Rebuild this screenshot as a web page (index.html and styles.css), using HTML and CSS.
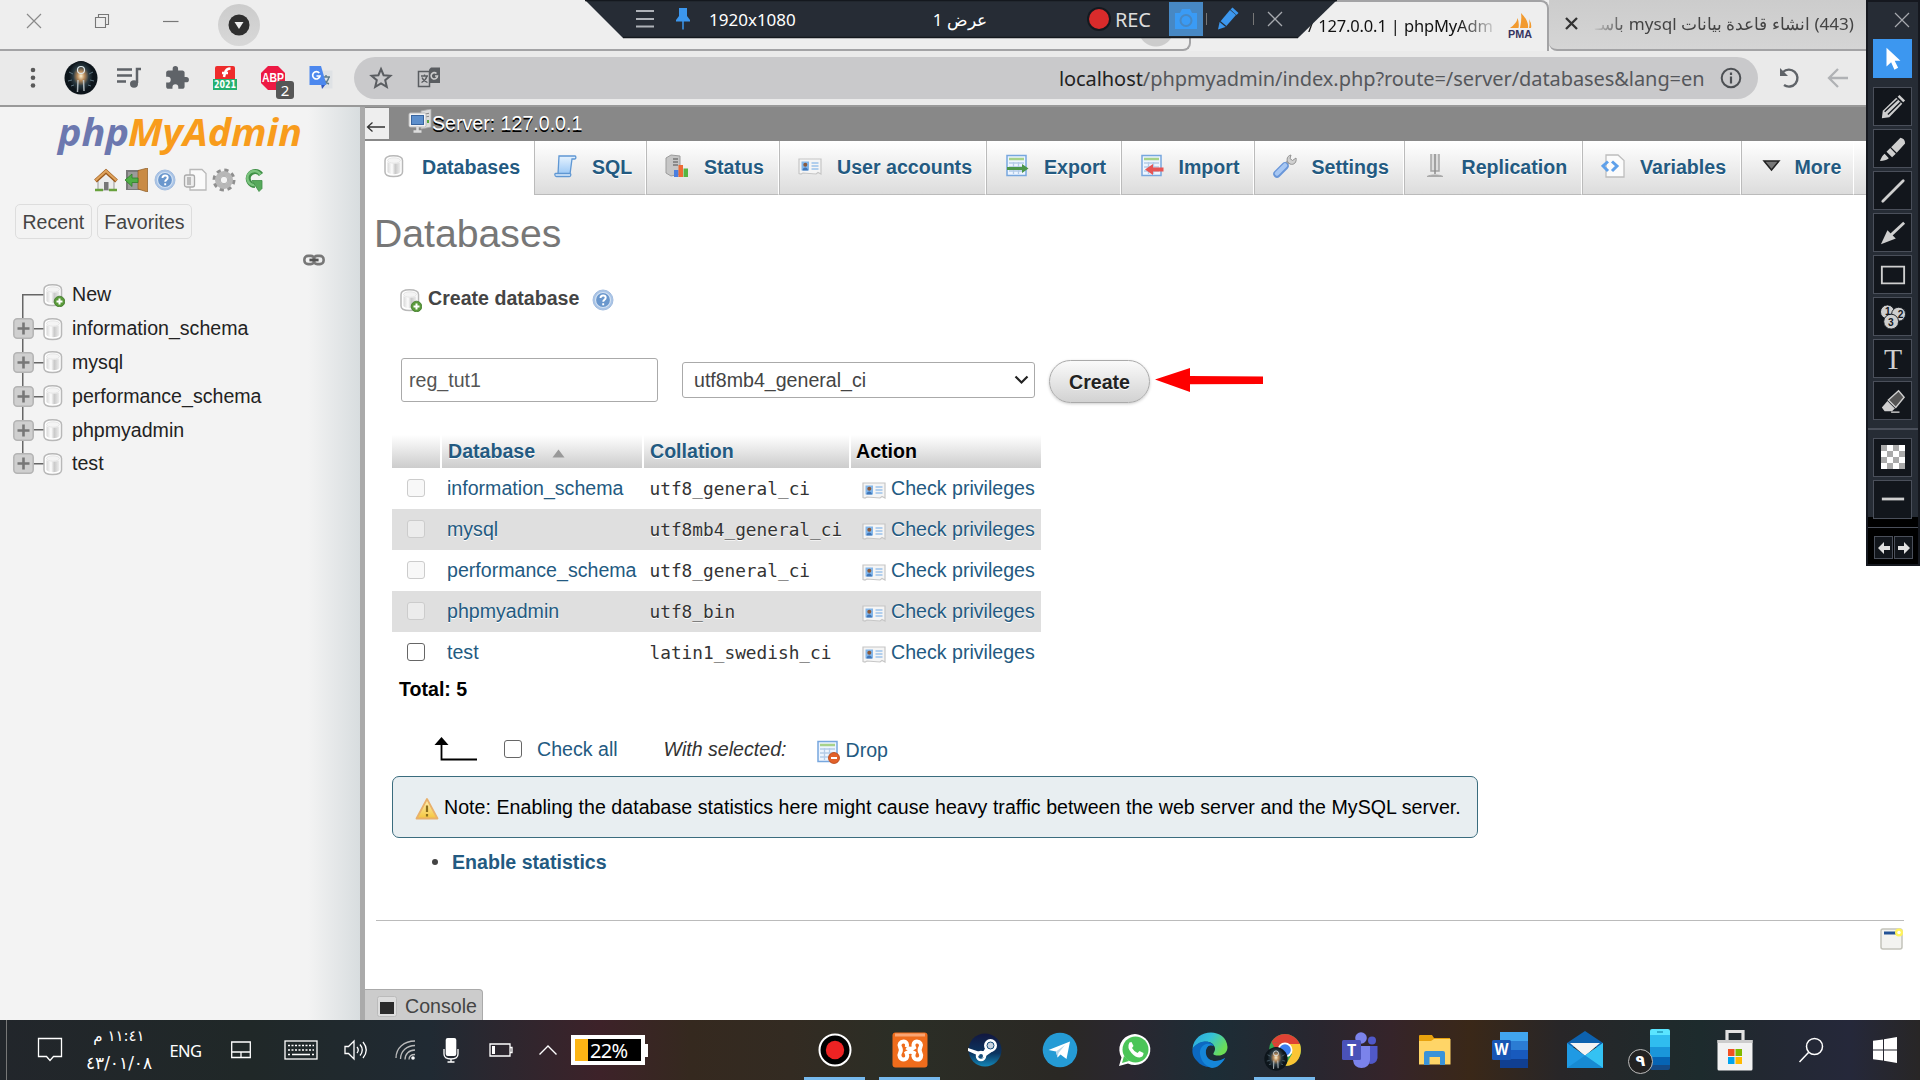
FILE: index.html
```html
<!DOCTYPE html>
<html lang="en">
<head>
<meta charset="utf-8">
<title>localhost / 127.0.0.1 | phpMyAdmin</title>
<link rel="stylesheet" href="styles.css">
</head>
<body>
<svg class="defs" width="0" height="0">
  <defs>
    <linearGradient id="gCyl" x1="0" x2="1"><stop offset="0" stop-color="#d8d8d8"/><stop offset=".35" stop-color="#fdfdfd"/><stop offset=".6" stop-color="#c9c9c9"/><stop offset="1" stop-color="#eee"/></linearGradient>
    <linearGradient id="gBlue" x1="0" y1="0" x2="0" y2="1"><stop offset="0" stop-color="#e6f3ff"/><stop offset="1" stop-color="#9cc8f5"/></linearGradient>
    <linearGradient id="gWarn" x1="0" y1="0" x2="0" y2="1"><stop offset="0" stop-color="#fff3b8"/><stop offset="1" stop-color="#f5c53c"/></linearGradient>
    <linearGradient id="gSteam" x1="0" y1="0" x2="0" y2="1"><stop offset="0" stop-color="#12173f"/><stop offset=".6" stop-color="#0b3560"/><stop offset="1" stop-color="#1387b8"/></linearGradient>
    <linearGradient id="gEdge" x1="0" y1="0" x2="1" y2=".5"><stop offset="0" stop-color="#2aa5e0"/><stop offset=".5" stop-color="#35c1d6"/><stop offset="1" stop-color="#6bdd55"/></linearGradient>
    <radialGradient id="gLamp"><stop offset="0" stop-color="#fff3d0"/><stop offset=".3" stop-color="#b98c5c"/><stop offset=".65" stop-color="#2a3a42"/><stop offset="1" stop-color="#0d151b"/></radialGradient>
  </defs>
  <symbol id="db" viewBox="0 0 24 24"><path d="M3 6.500c0-3 3-4.800 8.500-4.800s9 1.800 9 4.800v11.500c0 3-3.500 4.500-9 4.500s-8.500-1.500-8.500-4.500z" fill="#fff" stroke="#b8b8b8" stroke-width="1.500"/><path d="M5.500 8c2 2 11 2 13 0v10c-2 3-11 3-13 0z" fill="url(#gCyl)"/><ellipse cx="12" cy="6.500" rx="6.500" ry="2.700" fill="#f4f4f4" stroke="#ddd" stroke-width=".7"/></symbol>
  <symbol id="dbnew" viewBox="0 0 24 24"><use href="#db"/><circle cx="18.500" cy="18.500" r="5.300" fill="#5a9a3a" stroke="#3b7526" stroke-width=".8"/><path d="M18.500 15.500v6M15.500 18.500h6" stroke="#fff" stroke-width="2"/></symbol>
  <symbol id="help" viewBox="0 0 24 24"><circle cx="12" cy="12" r="10" fill="#a9c4e6" stroke="#a3bde0"/><circle cx="12" cy="12" r="7.500" fill="#6a97cd" stroke="#d3e1f2" stroke-width="1.200"/><path d="M9.500 10c0-3.500 5.200-3.200 5.200-.3 0 2-2.500 2-2.500 4M12.200 15.300v1.900" fill="none" stroke="#fff" stroke-width="1.900"/></symbol>
  <symbol id="home" viewBox="0 0 24 24"><path d="M4 12l8-7 8 7v10H4z" fill="#ececec" stroke="#999"/><path d="M10 22v-8h4.500v8z" fill="#777"/><path d="M1.500 13L12 3.500 22.500 13" fill="none" stroke="#9c5a1c" stroke-width="4"/><path d="M1.500 12.500L12 3 22.500 12.500" fill="none" stroke="#dfa35c" stroke-width="2.200"/><path d="M1 22h8M15 22h8" stroke="#68a13c" stroke-width="2.500"/></symbol>
  <symbol id="exit" viewBox="0 0 24 24"><path d="M2 2h16v20H2z" fill="#7a7a7a"/><path d="M4 4h10v17H4z" fill="#9b9b9b"/><path d="M14 2.500L23.500 0v24L14 21z" fill="#c98b45" stroke="#8d5a22" stroke-width=".7"/><path d="M1 12l7-6v4h6v4.500H8v4z" fill="#4fae45" stroke="#2e7d2a" stroke-width=".8"/></symbol>
  <symbol id="docs" viewBox="0 0 24 24"><path d="M7 1.500h12l4 4V22H7z" fill="#fafafa" stroke="#b9b9b9" stroke-width="1.300"/><rect x="1.500" y="7" width="10" height="12" rx="2" fill="#eee" stroke="#aaa" stroke-width="1.300"/><rect x="4" y="9" width="4" height="8" fill="#bbb"/></symbol>
  <symbol id="gear" viewBox="0 0 24 24"><circle cx="12" cy="12" r="9.500" fill="none" stroke="#8f8f8f" stroke-width="4" stroke-dasharray="4 3.460"/><circle cx="12" cy="12" r="6.500" fill="none" stroke="#b7b7b7" stroke-width="5"/><circle cx="12" cy="12" r="3.800" fill="#f3f3f3" stroke="#999" stroke-width=".8"/></symbol>
  <symbol id="refresh" viewBox="0 0 24 24"><path d="M19 6.500A7 7 0 1 0 13 17.500" fill="none" stroke="#3f8f46" stroke-width="5"/><path d="M18.500 6.500A7 7 0 1 0 13 17" fill="none" stroke="#7cc47f" stroke-width="2.500"/><path d="M10 12.500h10v8l-3 3z" fill="#57a95b" stroke="#3f8f46" stroke-width=".8"/></symbol>
  <symbol id="link" viewBox="0 0 24 24"><rect x="1.500" y="7.500" width="11" height="9" rx="4" fill="none" stroke="#777" stroke-width="2.800"/><rect x="11.500" y="7.500" width="11" height="9" rx="4" fill="none" stroke="#777" stroke-width="2.800"/><path d="M7 12h10" stroke="#555" stroke-width="3"/></symbol>
  <symbol id="plus" viewBox="0 0 21 21"><rect x=".8" y=".8" width="19.400" height="19.400" rx="3.500" fill="#cfcfcf" stroke="#b4b4b4" stroke-width="1.500"/><path d="M10.500 4.500v12M4.500 10.500h12" stroke="#777" stroke-width="2.600"/></symbol>
  <symbol id="server" viewBox="0 0 24 24"><path d="M13 2l10-2v18l-10 2z" fill="#dcdcdc" stroke="#aaa" stroke-width=".8"/><path d="M17 5l4-.7M17 8l4-.7" stroke="#888"/><path d="M20 11v3" stroke="#5aa845" stroke-width="2"/><rect x="1" y="4" width="17" height="14" rx="1.500" fill="#f3f3f3" stroke="#bbb"/><rect x="3.500" y="6.500" width="12" height="9" fill="#5d8fcc" stroke="#39659f"/><path d="M9.500 18v4M5.500 22.500h8" stroke="#ddd" stroke-width="2.500"/></symbol>
  <symbol id="sql" viewBox="0 0 24 24"><path d="M6 2h16c1 0 1.500 3-.5 3H19l-2 15H5z" fill="url(#gBlue)" stroke="#5f97d3" stroke-width="1.300"/><path d="M2.500 19.500h14c2 0 1.500 3 0 3h-13c-2 0-2-3-1-3z" fill="#dcecfc" stroke="#5f97d3" stroke-width="1.300"/></symbol>
  <symbol id="status" viewBox="0 0 24 24"><path d="M1 4l5-3 9 1v18l-9 2-5-3z" fill="#c6c6c6" stroke="#9c9c9c"/><path d="M8 5h5M8 8h5M8 11h5" stroke="#777" stroke-width="1.500"/><path d="M9 16h4.500v7H9z" fill="#4a7fe0"/><path d="M13.500 11H18v12h-4.500z" fill="#ee6b35"/><path d="M18.500 14.500H23V23h-4.500z" fill="#57b540"/></symbol>
  <symbol id="card" viewBox="0 0 24 24"><path d="M1 5h22v15l-3-1.500-2 1.500-13-1-2 1-2-.5z" fill="#f5f5f5" stroke="#c6c6c6" stroke-width="1.200"/><rect x="3.500" y="7.500" width="7.500" height="9" fill="#82b6ea"/><circle cx="7.300" cy="10.800" r="2" fill="#8b5a3c"/><path d="M4.500 16.500c0-4 5.500-4 5.500 0z" fill="#3f76b8"/><path d="M13.500 9h7M13.500 12h7M13.500 15h7" stroke="#9cc2ea" stroke-width="1.400"/></symbol>
  <symbol id="table" viewBox="0 0 24 24"><rect x="2" y="1.500" width="19" height="20" fill="#edf5ff" stroke="#77a7de" stroke-width="1.500"/><path d="M4 5h15" stroke="#a7d28a" stroke-width="2.500"/><path d="M4 9h15M4 13h15M4 17h15M8.500 8v12M13.500 8v12" stroke="#b4cce8" stroke-width="1.300"/></symbol>
  <symbol id="export" viewBox="0 0 24 24"><use href="#table"/><path d="M2 13h15v-3l6.500 4.500-6.500 4.500v-3H2z" fill="#4c9649"/></symbol>
  <symbol id="import" viewBox="0 0 24 24"><use href="#table"/><path d="M23.500 13.500H13v-3.500l-8 5.500 8 5.500v-3.500h10.500z" fill="#e65555"/></symbol>
  <symbol id="drop" viewBox="0 0 24 24"><use href="#table"/><circle cx="18" cy="18" r="5.500" fill="#e2612a" stroke="#b84414" stroke-width=".8"/><path d="M15 18h6" stroke="#fff" stroke-width="2"/></symbol>
  <symbol id="wrench" viewBox="0 0 24 24"><path d="M11 12.500L17 6" stroke="#a6a6a6" stroke-width="4"/><path d="M18 1c-5 1-5 7-1 9 4 1.500 7-2 6-6l-3.500 2.500-2.500-2z" fill="#d0d0d0" stroke="#929292"/><path d="M4 20l8-8" stroke="#6996d8" stroke-width="7.500" stroke-linecap="round"/><path d="M4 19.500l8-8" stroke="#a7c7f3" stroke-width="4.500" stroke-linecap="round"/></symbol>
  <symbol id="replication" viewBox="0 0 24 24"><path d="M8 0v17h8V0" fill="#ddd" stroke="#a5a5a5" stroke-width="1.500"/><path d="M12 0v20" stroke="#8c8c8c" stroke-width="1.500"/><path d="M4 22.500c3-2 13-2 16 0z" fill="#aaa" stroke="#aaa"/></symbol>
  <symbol id="variables" viewBox="0 0 24 24"><path d="M5 1h12l6 5.500V23H5z" fill="#fbfbfb" stroke="#bdbdbd" stroke-width="1.300"/><path d="M7 7.500L2 12l5 5M11 7.500l5 4.500-5 5" fill="none" stroke="#5ea0ea" stroke-width="3"/></symbol>
  <symbol id="warn" viewBox="0 0 24 24"><path d="M12 2L22.500 21.500h-21z" fill="url(#gWarn)" stroke="#e8b06a" stroke-width="1.800" stroke-linejoin="round"/><path d="M12 8.500v6.500M12 17v2.500" stroke="#8a6d1c" stroke-width="2.200"/></symbol>
  <symbol id="lamp" viewBox="0 0 34 34"><circle cx="17" cy="17" r="16.500" fill="#0d151b"/><ellipse cx="17" cy="15" rx="12" ry="15" fill="url(#gLamp)"/><circle cx="17" cy="9" r="3.500" fill="none" stroke="#dfe9ec" stroke-width="1.200"/><path d="M14 19l-.5 12M19.500 19l.5 11" stroke="#cdd6da" stroke-width="1.500" opacity=".8"/><path d="M5 11l4 2M4 20l4-1M29 11l-4 2M30 20l-4-1M7 25l3-1M27 25l-3-1" stroke="#5d7480"/></symbol>
  <symbol id="transl" viewBox="0 0 24 24"><path d="M9 4.500h14.500v18H13z" fill="#dfe2e5"/><path d="M13 11h8M17 9v2M20 11c-1 4-3 6-6 7.500M14.500 13c1 2.500 3 4 5.500 5" stroke="#607d8b" stroke-width="1.400" fill="none"/><path d="M12 18h5l-4 5z" fill="#3157c0"/><path d="M.5 0h11.500l5.500 19H.5z" fill="#4d88ee"/><path d="M10.300 7A3.700 3.700 0 1 0 11 10H7.500" fill="none" stroke="#fff" stroke-width="1.700"/></symbol>
</svg>

<div class="screen">
  <header class="tabstrip">
    <div class="wincell close"><svg width="16" height="16" viewBox="0 0 16 16"><path d="M1 1l14 14M15 1L1 15" stroke="#8a8a8a" stroke-width="1.200"/></svg></div>
    <div class="wincell"><svg width="16" height="16" viewBox="0 0 16 16"><path d="M1.500 4.500h10v10h-10zM4.500 4V1.500h10v10H12" fill="none" stroke="#777" stroke-width="1.100"/></svg></div>
    <div class="wincell"><svg width="16" height="16" viewBox="0 0 16 16"><path d="M0 8.500h15.500" stroke="#777" stroke-width="1.200"/></svg></div>
    <div class="tabsearch"><svg width="22" height="22" viewBox="0 0 22 22"><circle cx="11" cy="11" r="10.500" fill="#2f2f2f"/><path d="M6.500 8h9L11 15z" fill="#eee"/></svg></div>
    <div class="tab active"><span class="tab-title">/ 127.0.0.1 | phpMyAdm</span>
      <svg width="24" height="26" viewBox="0 0 24 26"><path d="M2 15Q9 10 9.500 5q2 5 1 10zM12 15Q14 6 13 0q8 8 7 15zM21 15q1-5 0-9 3 5 2 9z" fill="#f29a2e"/><text x="0" y="25" class="pma-text" textLength="24" lengthAdjust="spacingAndGlyphs">PMA</text></svg>
    </div>
    <div class="tab idle"><svg width="13" height="13" viewBox="0 0 13 13"><path d="M1 1l11 11M12 1L1 12" stroke="#333" stroke-width="2.300"/></svg><span class="tab-title" dir="rtl">(443) انشاء قاعدة بيانات mysql باسـ</span></div>
  </header>

  <div class="toolbar">
    <div class="cell"><svg width="6" height="24" viewBox="0 0 6 24"><g fill="#5a5a5a"><circle cx="3" cy="4" r="2.300"/><circle cx="3" cy="11.700" r="2.300"/><circle cx="3" cy="19.500" r="2.300"/></g></svg></div>
    <div class="cell"><svg width="34" height="34"><use href="#lamp"/></svg></div>
    <div class="cell"><svg width="24" height="22" viewBox="0 0 24 22"><path d="M0 2.500h15M0 8.500h15M0 14.500h9M20 16V2h4" fill="none" stroke="#5f6368" stroke-width="2.500"/><ellipse cx="17" cy="17" rx="4" ry="3.700" fill="#5f6368"/></svg></div>
    <div class="cell"><svg width="26" height="26" viewBox="0 0 24 24"><path d="M20.500 11H19V7c0-1.100-.9-2-2-2h-4V3.500a2.500 2.500 0 0 0-5 0V5H4c-1.100 0-2 .9-2 2v3.800h1.500a2.700 2.700 0 0 1 0 5.400H2V20c0 1.100.9 2 2 2h3.800v-1.500a2.700 2.700 0 0 1 5.400 0V22H17c1.100 0 2-.9 2-2v-4h1.500a2.500 2.500 0 0 0 0-5z" fill="#5f6368"/></svg></div>
    <div class="cell"><svg width="24" height="24" viewBox="0 0 24 24"><path d="M2 2q0-2 2-2h16q2 0 2 2v11H2z" fill="#ee2c2c"/><path d="M17.500 2.500q-4.500 0-5.500 4.500l-1 4M9 7H15" fill="none" stroke="#fff" stroke-width="2.500"/><path d="M0 13h24v11H0z" fill="#25b06f"/><text x="1" y="22.300" class="flash-text" textLength="22" lengthAdjust="spacingAndGlyphs">2021</text></svg></div>
    <div class="cell ext"><svg width="24" height="24" viewBox="0 0 24 24"><path d="M7 0h10l7 7v10l-7 7H7l-7-7V7z" fill="#ed1944"/><text x="1" y="16" class="abp-text" textLength="22" lengthAdjust="spacingAndGlyphs">ABP</text></svg><span class="count">2</span></div>
    <div class="cell"><svg width="24" height="24"><use href="#transl"/></svg></div>
    <div class="omnibox">
      <div class="cell"><svg width="24" height="24" viewBox="0 0 24 24"><path d="M12 3l2.600 6.200 6.800.6-5.200 4.400 1.600 6.600-5.800-3.500-5.800 3.500 1.600-6.600-5.200-4.400 6.800-.6z" fill="none" stroke="#5a5d61" stroke-width="2"/></svg></div>
      <div class="cell"><svg width="24" height="24" viewBox="0 0 24 24"><path d="M1.500 5.500h11v15h-11z" fill="none" stroke="#5a5d61" stroke-width="1.500"/><path d="M4 10h7M7.500 8.500V10M10 10c-1 4-3 5-5.500 6.500M5 11.500c1 2.500 3 4 5.500 5" stroke="#5a5d61" stroke-width="1.300" fill="none"/><path d="M12 3.500l2-2h9V17H12z" fill="#5a5d61"/><path d="M19.500 7.500a3.200 3.200 0 1 0 1 2.500H18" stroke="#ccc" stroke-width="1.600" fill="none"/></svg></div>
      <span class="url"><b>localhost</b>/phpmyadmin/index.php?route=/server/databases&amp;lang=en</span>
      <svg width="22" height="22" viewBox="0 0 22 22"><circle cx="11" cy="11" r="9.300" fill="none" stroke="#4c4f53" stroke-width="2"/><path d="M11 9.500v7M11 5.500v2.500" stroke="#4c4f53" stroke-width="2.200"/></svg>
    </div>
    <div class="cell reload"><svg width="24" height="24" viewBox="0 0 24 24"><path d="M5 6A8.500 8.500 0 1 1 6 19" fill="none" stroke="#5f6368" stroke-width="2.400"/><path d="M2 2v8h8z" fill="#5f6368"/></svg></div>
    <div class="cell"><svg width="22" height="22" viewBox="0 0 22 22"><path d="M21 11H2.500M11 2l-9 9 9 9" fill="none" stroke="#b0b2b5" stroke-width="2.300"/></svg></div>
  </div>

  <div class="page">
    <aside class="nav">
      <svg class="logo" width="250" height="46" viewBox="0 0 250 46"><g class="logo-text"><text x="3" y="32" fill="#6c78af" textLength="71" lengthAdjust="spacingAndGlyphs">php</text><text x="73" y="32" fill="#f89c1c" textLength="174" lengthAdjust="spacingAndGlyphs">MyAdmin</text></g></svg>
      <div class="nav-icons"><svg><use href="#home"/></svg><svg><use href="#exit"/></svg><svg><use href="#help"/></svg><svg><use href="#docs"/></svg><svg><use href="#gear"/></svg><svg><use href="#refresh"/></svg></div>
      <div class="nav-buttons"><span>Recent</span><span>Favorites</span></div>
      <svg class="linkicon"><use href="#link"/></svg>
      <ul class="tree">
        <li class="first"><svg class="dbi new"><use href="#dbnew"/></svg>New</li>
        <li><svg class="plus"><use href="#plus"/></svg><svg class="dbi"><use href="#db"/></svg>information_schema</li>
        <li><svg class="plus"><use href="#plus"/></svg><svg class="dbi"><use href="#db"/></svg>mysql</li>
        <li><svg class="plus"><use href="#plus"/></svg><svg class="dbi"><use href="#db"/></svg>performance_schema</li>
        <li><svg class="plus"><use href="#plus"/></svg><svg class="dbi"><use href="#db"/></svg>phpmyadmin</li>
        <li class="last"><svg class="plus"><use href="#plus"/></svg><svg class="dbi"><use href="#db"/></svg>test</li>
      </ul>
    </aside>

    <main class="main">
      <div class="serverbar"><div class="collapse"><svg width="20" height="12" viewBox="0 0 20 12"><path d="M19 6H1.500M6.500 1.500L1.500 6l5 4.500" fill="none" stroke="#333" stroke-width="1.300"/></svg></div><svg class="i24 srv"><use href="#server"/></svg><span>Server: 127.0.0.1</span></div>
      <nav class="tabs">
        <a class="t w-db on"><svg><use href="#db"/></svg>Databases</a>
        <a class="t w-sql"><svg><use href="#sql"/></svg>SQL</a>
        <a class="t w-status"><svg><use href="#status"/></svg>Status</a>
        <a class="t w-user"><svg><use href="#card"/></svg>User accounts</a>
        <a class="t w-exp"><svg><use href="#export"/></svg>Export</a>
        <a class="t w-imp"><svg><use href="#import"/></svg>Import</a>
        <a class="t w-set"><svg><use href="#wrench"/></svg>Settings</a>
        <a class="t w-rep"><svg><use href="#replication"/></svg>Replication</a>
        <a class="t w-var"><svg><use href="#variables"/></svg>Variables</a>
        <a class="t w-more"><svg viewBox="0 0 24 24"><path d="M4 7h15L11.500 16z" fill="#777" stroke="#222" stroke-width="1.500"/></svg>More</a>
        <span class="t rest"></span>
      </nav>
      <h1>Databases</h1>
      <div class="create-title"><svg class="i24"><use href="#dbnew"/></svg><b>Create database</b><svg class="i24 q"><use href="#help"/></svg></div>
      <div class="form">
        <div class="input">reg_tut1</div>
        <div class="select"><span>utf8mb4_general_ci</span><svg width="15" height="10" viewBox="0 0 15 10"><path d="M1.500 1.500l6 6 6-6" fill="none" stroke="#222" stroke-width="2.200"/></svg></div>
        <div class="button">Create</div>
        <svg class="arrow" width="108" height="24" viewBox="0 0 108 24"><path d="M0 11.500L35 0v8l73 .5V16l-73 .2V24z" fill="#fe0000"/></svg>
      </div>
      <table class="dbs">
        <thead><tr><th class="c1"></th><th class="c2"><span class="lk">Database</span><svg width="13" height="9" viewBox="0 0 13 9"><path d="M6.500 .5L12.500 8.500H.5z" fill="#999"/></svg></th><th class="c3"><span class="lk">Collation</span></th><th class="c4">Action</th></tr></thead>
        <tbody>
          <tr><td><i class="cb dis"></i></td><td>information_schema</td><td class="mono">utf8_general_ci</td><td><span class="priv"><svg><use href="#card"/></svg>Check privileges</span></td></tr>
          <tr><td><i class="cb dis"></i></td><td>mysql</td><td class="mono">utf8mb4_general_ci</td><td><span class="priv"><svg><use href="#card"/></svg>Check privileges</span></td></tr>
          <tr><td><i class="cb dis"></i></td><td>performance_schema</td><td class="mono">utf8_general_ci</td><td><span class="priv"><svg><use href="#card"/></svg>Check privileges</span></td></tr>
          <tr><td><i class="cb dis"></i></td><td>phpmyadmin</td><td class="mono">utf8_bin</td><td><span class="priv"><svg><use href="#card"/></svg>Check privileges</span></td></tr>
          <tr><td><i class="cb"></i></td><td>test</td><td class="mono">latin1_swedish_ci</td><td><span class="priv"><svg><use href="#card"/></svg>Check privileges</span></td></tr>
        </tbody>
      </table>
      <div class="total">Total: 5</div>
      <div class="bulk">
        <svg width="44" height="26" viewBox="0 0 44 26"><path d="M7.500 5v18.500H43" fill="none" stroke="#000" stroke-width="1.800"/><path d="M7.500 1l7 8h-14z" fill="#000"/></svg>
        <i class="cb"></i><span class="all">Check all</span><em>With selected:</em><svg class="i24"><use href="#drop"/></svg><span class="dropt">Drop</span>
      </div>
      <div class="note"><svg class="i24"><use href="#warn"/></svg><span>Note: Enabling the database statistics here might cause heavy traffic between the web server and the MySQL server.</span></div>
      <div class="enable"><i></i><b>Enable statistics</b></div>
      <hr>
      <svg class="newwin" viewBox="0 0 24 24"><rect x="1" y="2" width="21" height="20" rx="2" fill="#f3f3f0" stroke="#c3c3ba" stroke-width="1.500"/><path d="M4 6h12" stroke="#235296" stroke-width="3"/><circle cx="19" cy="5.500" r="4" fill="#fff35c"/><circle cx="19" cy="5.500" r="1.700" fill="#fff"/></svg>
      <div class="console"><svg width="20" height="21" viewBox="0 0 20 21"><rect x=".5" y=".5" width="19" height="20" rx="2" fill="#ddd" stroke="#bbb"/><path d="M3 6h14v12H3z" fill="#2b2b2b"/></svg>Console</div>
    </main>
  </div>

  <footer class="taskbar">
    <div class="tray">
      <i class="peek"></i>
      <div class="k k1"><svg width="26" height="26" viewBox="0 0 26 26"><path d="M1.500 1.500h23v18h-8L13 23.500 9.500 19.500h-8z" fill="none" stroke="#fff" stroke-width="1.300"/></svg></div>
      <div class="k clock"><span class="time" dir="rtl">١١:٤١ م</span><span dir="ltr">٤٣/٠١/٠٨</span></div>
      <div class="k lang">ENG</div>
      <div class="k k2"><svg width="20" height="18" viewBox="0 0 20 18"><path d="M.7 1h18.600v15.500H.7zM.7 11h18.600M10 11v5.500" fill="none" stroke="#fff" stroke-width="1.300"/></svg></div>
      <div class="k k3"><svg width="34" height="20" viewBox="0 0 34 20"><rect x="1" y="1" width="32" height="18" fill="none" stroke="#fff" stroke-width="1.300"/><path d="M4 5.500h26M4 10h26" stroke="#fff" stroke-width="1.500" stroke-dasharray="2 1.500"/><path d="M4 14.500h2M8 14.500h18M28 14.500h2" stroke="#fff" stroke-width="1.500"/></svg></div>
      <div class="k k4"><svg width="24" height="20" viewBox="0 0 24 20"><path d="M1 6.500h3.500L10 1v18l-5.500-5.500H1z" fill="none" stroke="#fff" stroke-width="1.300"/><path d="M13 7q2.500 3 0 6M16 4.500q4.500 5.500 0 11M19 2q6.500 8 0 16" fill="none" stroke="#fff" stroke-width="1.300"/></svg></div>
      <div class="k k5"><svg width="22" height="22" viewBox="0 0 22 22"><g fill="none" stroke="#bbb" stroke-width="1.300"><path d="M1 19C1 9 9 2 20 2M5.500 20C5.500 12 12 6.500 20 6.500M10 20.500C10 15 14 11 20 11"/><path d="M14 20.500q0-5 6-5"/></g><circle cx="18" cy="19" r="1.800" fill="#fff"/></svg></div>
      <div class="k k6"><svg width="16" height="26" viewBox="0 0 16 26"><rect x="2.700" y="1" width="10.600" height="18" rx="2" fill="#fff"/><path d="M1 12v5q0 5 7 5t7-5v-5M8 22v3M4.500 25h7" fill="none" stroke="#fff" stroke-width="1.300"/></svg></div>
      <div class="k k7"><svg width="24" height="14" viewBox="0 0 24 14"><path d="M1 1h20v12H1zM21 4.500h2v5h-2" fill="none" stroke="#fff" stroke-width="1.300"/><path d="M3 3h3v8H3z" fill="#fff"/></svg></div>
      <div class="k k8"><svg width="20" height="12" viewBox="0 0 20 12"><path d="M1.500 10.500L10 2l8.500 8.500" fill="none" stroke="#fff" stroke-width="1.400"/></svg></div>
      <div class="battery"><i></i><span>22%</span></div><b class="nub"></b>
    </div>
    <div class="apps">
      <div class="app run"><svg width="34" height="34" viewBox="0 0 34 34"><circle cx="17" cy="17" r="15.500" fill="#000" stroke="#fff" stroke-width="2"/><circle cx="17" cy="17" r="9.200" fill="#ed2323"/></svg></div>
      <div class="app run"><svg width="36" height="36" viewBox="0 0 36 36"><rect x=".5" y=".5" width="35" height="35" rx="3" fill="#ef6c1c"/><path d="M3 1.500h30v3H3z" fill="#f9a573"/><path d="M14.500 15.500c1.500-3 0-6-3-6s-5 3-3.500 5.500 1.500 3.500 0 6 0 6.500 3.500 6.500 4.500-3 3-6.500q4-2.500 7.500 0c-1.500 3.500 0 6.500 3.500 6.500s4.500-4 3-6.500-1.500-3.500 0-6-.5-5.500-3.500-5.500-4.500 3-3 6q-3.500 2.500-7.500 0" fill="none" stroke="#fff" stroke-width="4"/></svg></div>
      <div class="app"><svg width="34" height="34" viewBox="0 0 34 34"><circle cx="17" cy="17" r="16.500" fill="url(#gSteam)"/><circle cx="22.500" cy="12.500" r="5" fill="none" stroke="#fff" stroke-width="3"/><circle cx="22.500" cy="12.500" r="2.800" fill="none" stroke="#fff"/><path d="M0 18l10 4.500 4 2.500 4-2 7-5-5-7-4.500 7-3.500 1-12-4z" fill="#fff"/><circle cx="22.500" cy="12.500" r="3.500" fill="#c9d3de" stroke="#174d79"/><circle cx="13" cy="23" r="4" fill="none" stroke="#fff" stroke-width="2.500"/><circle cx="13" cy="23" r="2" fill="#174d79"/></svg></div>
      <div class="app"><svg width="36" height="36" viewBox="0 0 36 36"><circle cx="18" cy="18" r="17.300" fill="#259bd5"/><path d="M6.500 18L28 9.500 24.500 27l-6-4.500-3 3-1.500-6z" fill="#fff"/><path d="M14 19.500l9-6.500-6.500 8-1 4.500z" fill="#b6d6ea"/></svg></div>
      <div class="app"><svg width="34" height="34" viewBox="0 0 34 34"><path d="M1 33l2.500-8.500A15.500 15.500 0 1 1 10 30.500z" fill="#fff"/><circle cx="17.500" cy="16.500" r="13" fill="#4bc558"/><path d="M4 30l2-7 5 5z" fill="#4bc558"/><path d="M11.500 9.500l2-.5 2 4-1.500 2q2 3.500 5.500 5l2-2 4 2q0 4-4 4.500-4 0-8-4.500-5-5.500-2-10.500z" fill="#fff"/></svg></div>
      <div class="app"><svg width="36" height="36" viewBox="0 0 36 36"><path d="M.5 17C2-4 34-5 35.500 15c0 7-7 10-13 8-3-1 1-3 .5-7C21 7 7 8 .5 17z" fill="url(#gEdge)"/><path d="M.5 17C5 8 19 7 22 14c-6-3-9 3-8 8 1 8 12 9 19 4C27 37 12 38 5 29 1 25 0 21 .5 17z" fill="#0c69c1"/><path d="M14 22c-1-5 2-11 8-8-8-6-15 1-14 8 1 8 7 13 12 14 5 0 10-4 13-10-7 5-18 4-19-4z" fill="#1586d8"/></svg></div>
      <div class="app run chrome"><svg width="38" height="38" viewBox="0 0 38 38"><circle cx="21" cy="17" r="16" fill="#34a853"/><path d="M7.500 9C14-2 29-2 36 11H21z" fill="#df4234"/><path d="M36 11H21l7 10-7 12c13 0 18-12 15-22z" fill="#fbc535"/><path d="M7.500 9l7 12 6-10z" fill="#df4234"/><circle cx="21" cy="17" r="7.500" fill="#fff"/><circle cx="21" cy="17" r="5.800" fill="#3c7ef0"/><svg x="0" y="14" width="24" height="24"><use href="#lamp"/></svg></svg></div>
      <div class="app"><svg width="36" height="38" viewBox="0 0 36 38"><circle cx="30" cy="9.500" r="4" fill="#5059c9"/><path d="M24 15h11.500v12q-1 6-8 6z" fill="#5059c9"/><circle cx="19" cy="7" r="5.800" fill="#7b83eb"/><path d="M11 15h17v14q-1 8-8.500 8T11 29z" fill="#7b83eb"/><rect x="0" y="9" width="19" height="20" rx="1.500" fill="#4a52b8"/><text x="5" y="24.500" class="office">T</text></svg></div>
      <div class="app"><svg width="32" height="32" viewBox="0 0 32 32"><path d="M0 2q0-1 1-1h12l2 3h16v26H0z" fill="#e8a20e"/><path d="M0 7h12l3-2h16.500v25.500H0z" fill="#ffd567"/><path d="M5 31V19q0-2 2-2h17q2 0 2 2v12h-5v-8H10.500v8z" fill="#3a93d8"/></svg></div>
      <div class="app"><svg width="36" height="38" viewBox="0 0 36 38"><path d="M8 1h28v10H8z" fill="#41a5ee"/><path d="M8 10h28v10H8z" fill="#2b7cd3"/><path d="M8 19h28v10H8z" fill="#185abd"/><path d="M8 28h28v9H8z" fill="#103f91"/><rect y="9" width="19" height="20" rx="1.500" fill="#1756b5"/><text x="2.500" y="24" class="office" textLength="14" lengthAdjust="spacingAndGlyphs">W</text></svg></div>
      <div class="app"><svg width="38" height="38" viewBox="0 0 38 38"><path d="M1 12L19 0l18 12v4H1z" fill="#0d62af"/><path d="M4 12h30L19 25z" fill="#f4f4f4"/><path d="M1 12l18 12.500L37 12v25H1z" fill="#1f9ae4"/><path d="M37 12v25L19 24.500z" fill="#34c2f3"/><path d="M1 37l18-12.500L37 37z" fill="#178ad2"/></svg></div>
      <div class="app phone"><svg width="20" height="42" viewBox="0 0 20 42"><path d="M0 2q0-2 2-2h16q2 0 2 2v4H0z" fill="#5ae5ff"/><path d="M0 6h20v13H0z" fill="#30bdef"/><path d="M0 18h20v11H0z" fill="#1a96da"/><path d="M0 28h20v8H0z" fill="#0664b4"/><path d="M0 36h20v3q0 2-2 2H2q-2 0-2-2z" fill="#144a86"/><path d="M7 3h6" stroke="#08769e"/></svg><span class="badge">٩</span></div>
      <div class="app"><svg width="36" height="42" viewBox="0 0 36 42"><path d="M10 12V2.500h16V12" fill="none" stroke="#e2e2e2" stroke-width="3.200"/><path d="M.5 11h35v29q0 1.500-1.500 1.500H2q-1.500 0-1.500-1.500z" fill="#f2f2f2"/><path d="M.5 11h35v3H.5z" fill="#ccc"/><path d="M11 20h6.500v7H11z" fill="#f25022"/><path d="M18.500 20H25v7h-6.500z" fill="#7fba00"/><path d="M11 28h6.500v7H11z" fill="#00a4ef"/><path d="M18.500 28H25v7h-6.500z" fill="#ffb900"/></svg></div>
      <div class="app find"><svg width="26" height="26" viewBox="0 0 26 26"><circle cx="16.500" cy="9.500" r="8" fill="none" stroke="#fff" stroke-width="1.500"/><path d="M10.500 15.500L1.500 25" stroke="#fff" stroke-width="1.500"/></svg></div>
      <div class="app start"><svg width="24" height="26" viewBox="0 0 24 24" preserveAspectRatio="none"><path d="M0 3.500l10-1.300v9.300H0zM11 2l13-2v11.500H11zM0 12.500h10v9.300L0 20.500zM11 12.500h13V24l-13-2z" fill="#fff"/></svg></div>
    </div>
  </footer>

  <div class="recbar">
    <svg class="recshape" width="752" height="39" viewBox="0 0 752 39"><path d="M0 0h752l-39 38H38z" fill="#262c35"/><path d="M0 .5h752M38 37.500h675" stroke="#14181e" stroke-width="1.500"/></svg>
    <div class="recitems">
      <svg class="m" width="18" height="20" viewBox="0 0 18 20"><path d="M0 2h18M0 10h18M0 17.500h18" stroke="#aeb2b8" stroke-width="1.800"/></svg>
      <svg class="pin" width="14" height="22" viewBox="0 0 14 22"><path d="M3 0h8v8l3 4v1.500H0V12l3-4z" fill="#3c97ee"/><path d="M7 13v8.500" stroke="#3c97ee" stroke-width="1.500"/></svg>
      <span class="size">1920x1080</span><span class="name" dir="rtl">عرض 1</span>
      <i class="dot"></i><span class="rec">REC</span>
      <div class="cam"><svg width="24" height="22" viewBox="0 0 24 22"><path d="M1 5h5l2-4h8l2 4h5v16H1z" fill="#3a9bf5"/><circle cx="12" cy="12.500" r="5.500" fill="none" stroke="#4788c4" stroke-width="2"/></svg></div>
      <i class="sep"></i>
      <svg class="pen" width="20" height="22" viewBox="0 0 20 22"><path d="M0 21.500l1.500-7L12 2l6 5L7.500 19z" fill="#3c97ee"/><path d="M13.500 .5l6 5.500" stroke="#3c97ee" stroke-width="3"/><path d="M2 13.500l6 5" stroke="#262c35" stroke-width="1.300"/></svg>
      <i class="sep two"></i>
      <svg width="16" height="16" viewBox="0 0 16 16"><path d="M1 1l14 14M15 1L1 15" stroke="#a6a9ae" stroke-width="1.300"/></svg>
    </div>
  </div>

  <div class="drawbar">
    <svg class="x" width="16" height="16" viewBox="0 0 16 16"><path d="M1 1l14 14M15 1L1 15" stroke="#a6a9ae" stroke-width="1.200"/></svg>
    <div class="d sel"><svg viewBox="0 0 28 28"><path d="M7 2v20l5-4.500 3.500 8 4-2-3.700-7.500H22z" fill="#fff"/></svg></div>
    <div class="d gap"><svg viewBox="0 0 28 28"><path d="M2 26l1-8L17.500 4l6.500 6.500L10 25z" fill="#cfcfcf"/><path d="M19 3l2-2 6 6-2 2z" fill="#cfcfcf"/><path d="M5 19L19 6M8.500 22L22 9" stroke="#15191f" stroke-width="1.500"/></svg></div>
    <div class="d"><svg viewBox="0 0 28 28"><path d="M12 12l10-10q5 1 5 6L18 18zM7 17l4-4 6 6-4 4zM0 27q2-6 5-8l4.500 5Q6 27 0 27z" fill="#cfcfcf"/></svg></div>
    <div class="d"><svg viewBox="0 0 28 28"><path d="M3 25L25 3" stroke="#cfcfcf" stroke-width="3" stroke-linecap="round"/></svg></div>
    <div class="d"><svg viewBox="0 0 28 28"><path d="M26 3L12 16" stroke="#cfcfcf" stroke-width="3"/><path d="M1 26l7-15 9 9z" fill="#cfcfcf"/></svg></div>
    <div class="d"><svg viewBox="0 0 28 28"><path d="M2 5h24v18H2z" fill="none" stroke="#cfcfcf" stroke-width="2"/></svg></div>
    <div class="d"><svg viewBox="0 0 28 28"><g fill="#cfcfcf" stroke="#15191f"><circle cx="8" cy="8.500" r="7.500"/><circle cx="20" cy="11" r="7.500"/><circle cx="12" cy="19" r="8"/></g><text x="5.500" y="12" class="num">1</text><text x="19" y="15" class="num">2</text><text x="8.500" y="23.500" class="num">3</text></svg></div>
    <div class="d"><svg viewBox="0 0 28 28"><text x="14" y="25" text-anchor="middle" class="tee">T</text></svg></div>
    <div class="d"><svg viewBox="0 0 28 28"><path d="M2 21l6-7 8 8-3 3H5z" fill="#cfcfcf"/><path d="M9 13L20 3l6 7-9 11z" fill="#555" stroke="#cfcfcf" stroke-width="1.500"/><path d="M12 26h9" stroke="#cfcfcf" stroke-width="1.500"/></svg></div>
    <hr class="dl">
    <div class="d"><i class="checker"></i></div>
    <div class="d"><svg viewBox="0 0 28 28"><path d="M2 14h24" stroke="#cfcfcf" stroke-width="3"/></svg></div>
    <hr class="dl">
    <div class="pair"><i><svg width="12" height="12" viewBox="0 0 12 12"><path d="M0 6l6-6v4h6v4H6v4z" fill="#e0e0e0"/></svg></i><i><svg width="12" height="12" viewBox="0 0 12 12"><path d="M12 6L6 0v4H0v4h6v4z" fill="#e0e0e0"/></svg></i></div>
  </div>
</div>
</body>
</html>
```
FILE: styles.css
```css
* { box-sizing: border-box; }
body { margin: 0; overflow: hidden; font-family: "Liberation Sans", Arial, sans-serif; font-size: 19.6px; color: #444; }
svg { display: block; flex: none; overflow: visible; }
.defs { position: absolute; }
.screen { position: relative; width: 1920px; height: 1080px; display: grid; grid-template-rows: 51px 56px 913px 60px; background: #fff; overflow: hidden; }

/* browser tab strip */
.tabstrip { display: flex; background: #eee; font-family: "Noto Sans", "Open Sans", sans-serif; font-size: 16.5px; color: #111; }
.wincell { width: 69.500px; height: 51px; padding-top: 13px; display: flex; justify-content: center; border-bottom: 2px solid #a3a3a5; }
.wincell.close { width: 67px; }
.tabsearch { width: 985px; padding: 4px 0 0 11.500px; border-bottom: 2px solid #a3a3a5; border-right: 2px solid #a3a3a5; border-bottom-right-radius: 8px; background: radial-gradient(circle at 950px 29px, #ccc 17px, transparent 18px); }
.tabsearch svg { box-sizing: content-box; padding: 10px; border-radius: 50%; background: linear-gradient(#ccc, #d8d8d8); }
.tab { display: flex; align-items: center; height: 51px; padding-bottom: 2px; white-space: nowrap; }
.tab.active { width: 358px; padding-left: 117px; border-top: 2px solid #a3a3a5; border-right: 2px solid #a3a3a5; border-top-right-radius: 8px; }
.tab.active .tab-title { width: 200px; letter-spacing: -.15px; -webkit-mask-image: linear-gradient(90deg, #000 150px, transparent 192px); }
.tab.idle { flex: 1; gap: 14px; padding-left: 16px; background: linear-gradient(#ccc, #d5d5d5); border-bottom: 2px solid #a3a3a5; border-bottom-left-radius: 8px; color: #444; }
.tab.idle .tab-title { width: 262px; font-size: 17.100px; -webkit-mask-image: linear-gradient(90deg, transparent, #000 35px); }
.pma-text { font: bold 10px "Liberation Sans", sans-serif; fill: #35345f; }

/* browser toolbar */
.toolbar { display: flex; align-items: center; padding-left: 9px; background: #eaeaea; border-bottom: 2px solid #999; }
.cell { width: 48px; display: flex; justify-content: center; align-items: center; }
.ext { position: relative; }
.count { position: absolute; left: 27px; top: 15px; width: 18px; height: 18px; border-radius: 3px; background: #565656; color: #fff; font: 15px/18px "Noto Sans", sans-serif; text-align: center; }
.flash-text { font: bold 10px "DejaVu Sans", sans-serif; fill: #fff; }
.abp-text { font: bold 12px "Liberation Sans", sans-serif; fill: #fff; }
.omnibox { display: flex; align-items: center; width: 1404px; height: 42px; margin-left: 9px; padding: 0 16px 0 3px; border-radius: 21px; background: #c9c9cb; }
.url { margin-left: auto; margin-right: 15.500px; font: 20px "Noto Sans", "Open Sans", sans-serif; letter-spacing: -.07px; color: #55575b; white-space: nowrap; }
.url b { font-weight: 400; color: #222; }
.reload { margin-left: 8px; }

/* navigation panel */
.page { display: grid; grid-template-columns: 365px 1fr; }
.nav { display: flex; flex-direction: column; border-right: 5px solid #aaa; background: linear-gradient(90deg, #f3f3f3 308px, #d8dddf 360px); }
.logo { margin: 7px 0 0 55px; }
.logo-text { font: italic 700 37px "Open Sans", "Noto Sans", sans-serif; }
.nav-icons { display: flex; gap: 5.500px; margin: 8px 0 0 94px; }
.nav-icons svg { width: 24px; height: 24px; }
.nav-buttons { display: flex; gap: 5px; margin: 12px 0 0 15px; }
.nav-buttons span { height: 35px; padding: 0 6.500px; border: 1px solid #ddd; border-radius: 5px; line-height: 35px; font-size: 19.500px; }
.linkicon { width: 22px; height: 22px; margin: 10px 0 0 303px; }
.tree { list-style: none; margin: 7px 0 0; padding: 0; color: #222; }
.tree li { display: flex; align-items: center; height: 33.800px; padding-left: 13px; background: linear-gradient(#666, #666) 22px 0 / 1.500px 100% no-repeat, linear-gradient(#666, #666) 22px 50% / 24px 1.500px no-repeat; }
.tree .first { background-size: 1.500px 50%, 24px 1.500px; background-position: 22px 100%, 22px 50%; padding-left: 42px; }
.tree .last { background-size: 1.500px 50%, 24px 1.500px; }
.plus { width: 21px; height: 21px; }
.dbi { width: 24px; height: 24px; margin: 0 7px 0 7px; }
.dbi.new { margin-left: -1px; }

/* main panel */
.main { display: flex; flex-direction: column; align-items: flex-start; background: #fff; }
.serverbar { width: 100%; height: 34px; display: flex; background: #888; color: #fff; text-shadow: 0 1.500px 0 #000; }
.serverbar span { line-height: 32px; }
.collapse { width: 24px; height: 31px; margin-top: 1px; display: flex; align-items: center; justify-content: center; background: #eee; }
.collapse svg { margin: 6px 0 0 -2px; }
.i24 { width: 24px; height: 24px; }
.srv { margin: 2px 0 0 19px; }
.tabs { width: 1555px; height: 54px; display: flex; font-weight: 700; color: #235a81; }
.t { display: flex; align-items: center; gap: 15px; height: 54px; padding: 0 0 1px 18px; border-left: 1.500px solid #bbb; border-right: 1.500px solid #fff; border-bottom: 1px solid #bbb; background: linear-gradient(#fff, #dcdcdc); text-shadow: 0 1px 0 #fff; white-space: nowrap; }
.t svg { width: 24px; height: 24px; margin-top: -2px; }
.t.on { border-color: transparent; background: #fff; padding-left: 16px; gap: 16px; }
.w-db { width: 169px; } .w-sql { width: 112px; } .w-status { width: 133px; } .w-user { width: 207px; }
.w-exp { width: 134.500px; } .w-imp { width: 133px; } .w-set { width: 150px; } .w-rep { width: 178.500px; }
.w-var { width: 158.500px; } .w-more { width: 113.500px; gap: 11px; } .rest { flex: 1; border-left: 0; }
h1 { margin: 16px 0 0 9px; height: 46px; font-size: 39.200px; line-height: 46px; font-weight: 400; color: #777; }
.create-title { display: flex; align-items: center; margin: 31px 0 0 33px; height: 24px; }
.create-title b { margin-left: 6px; line-height: 20px; padding-bottom: 5px; }
.q { margin-left: 12px; }
.form { display: flex; height: 46px; margin: 45px 0 0 36px; }
.input { width: 257px; height: 44px; padding-left: 7px; margin-top: 1px; border: 1.500px solid #aaa; border-radius: 3px; line-height: 42px; color: #555; }
.select { display: flex; align-items: center; justify-content: space-between; width: 353px; height: 36px; margin: 5px 0 0 24px; padding: 0 5px 0 11px; border: 1.500px solid #aaa; border-radius: 3px; background: #fff; }
.button { width: 101px; height: 43px; margin: 3px 0 0 14px; border: 1.500px solid #aaa; border-radius: 22px; background: linear-gradient(#fafafa, #d2d2d2); line-height: 43px; text-align: center; font-weight: 700; color: #222; text-shadow: 0 1px 0 #fff; box-shadow: 0 1px 3px #ccc; }
.arrow { margin: 11px 0 0 5px; }
.dbs { width: 649px; margin: 32px 0 0 27px; border-collapse: separate; border-spacing: 0; table-layout: fixed; color: #235a81; }
.dbs th { height: 33px; padding: 0 0 0 6px; text-align: left; border-right: 2px solid #fff; background: linear-gradient(#fff, #ccc); color: #000; text-shadow: 0 1px 0 #fff; }
.dbs .lk { color: #235a81; }
.dbs .c1 { width: 50px; } .dbs .c2 { width: 202px; } .dbs .c3 { width: 207px; } .dbs .c4 { border-right: 0; padding-left: 5px; }
.dbs th svg { display: inline-block; margin-left: 17px; }
.dbs td { height: 41px; padding: 0 0 0 5px; white-space: nowrap; text-shadow: 0 1px 0 #fff; }
.dbs td:first-child { padding-left: 15px; }
.dbs td:nth-child(3) { padding-left: 5.500px; }
.dbs tbody tr:nth-child(even) { background: #dfdfdf; }
.dbs .mono { font: 17.800px "DejaVu Sans Mono", monospace; color: #333; }
.priv { display: flex; align-items: center; gap: 5px; padding-left: 6px; }
.priv svg { width: 24px; height: 24px; margin-top: 3px; }
.cb { display: block; width: 18px; height: 18px; border: 1.500px solid #666; border-radius: 3px; background: #fff; }
.cb.dis { border-color: #ccc; background: #f8f8f8; }
td .cb { margin-top: -2px; }
tr:nth-child(even) .cb.dis { background: #ececec; }
.total { margin: 5px 0 0 34px; height: 22px; line-height: 22px; font-weight: 700; color: #000; }
.bulk { display: flex; align-items: center; height: 28px; margin: 35px 0 0 69px; }
.bulk .cb { margin-left: 26px; }
.bulk .all { margin-left: 15px; color: #235a81; }
.bulk em { margin-left: 46px; color: #333; }
.bulk .i24 { margin: 5px 5px 0 30px; }
.dropt { color: #235a81; padding-top: 2px; }
.note { display: flex; align-items: center; width: 1086px; height: 62px; margin: 13px 0 0 27px; padding-left: 22px; border: 1.500px solid #3a6c7e; border-radius: 7px; background: #e8eef1; color: #000; white-space: nowrap; letter-spacing: .034px; }
.note .i24 { margin: 3px 5px 0 0; }
.enable { display: flex; align-items: center; height: 24px; margin: 12px 0 0 67px; color: #235a81; }
.enable i { width: 6px; height: 6px; margin-right: 14px; border-radius: 50%; background: #444; }
hr { width: 1528px; height: 1px; margin: 46px 0 0 11px; border: 0; background: #bbb; }
.newwin { width: 24px; height: 24px; margin: 6px 0 0 1515px; }
.console { display: flex; gap: 8px; width: 118px; height: 31px; margin-top: auto; padding: 5px 0 0 12px; border: 1.500px solid #aaa; border-left: 0; border-bottom: 0; border-top-right-radius: 4px; background: #ccc; line-height: 22px; }
.console svg { margin-top: 1px; }

/* taskbar */
.taskbar { display: flex; background: linear-gradient(90deg, #22262b 0, #202828 250px, #202a33 430px, #3d2229 600px, #35291f 690px, #332b22 790px, #2b2e26 900px, #2a2824 1060px, #2a2730 1130px, #1c2d36 1215px, #29262f 1320px, #35242a 1390px, #3a2818 1470px, #282628 1560px, #1d2b2d 1700px, #222831 1760px, #25283a 1850px, #282626 1920px); color: #fff; font-family: "Noto Sans", "Open Sans", sans-serif; }
.tray { display: flex; align-items: center; width: 797px; }
.peek { width: 1px; height: 60px; margin-left: 6px; background: #777; }
.k { display: flex; justify-content: center; align-items: center; }
.k1 { width: 86px; }
.clock { width: 52px; flex-direction: column; font: 17px/27px "DejaVu Sans", sans-serif; white-space: nowrap; }
.clock span { letter-spacing: -.6px; }
.clock .time { font-size: 15px; letter-spacing: -1.200px; }
.lang { width: 81px; font-size: 16.500px; letter-spacing: -.6px; }
.k2 { width: 32px; margin-left: -1px; } .k3 { width: 87px; } .k4 { width: 24px; } .k5 { width: 75px; } .k6 { width: 16px; } .k7 { width: 83px; } .k8 { width: 12px; }
.battery { display: flex; align-items: center; width: 74px; height: 30px; margin-left: 17px; border: 4px solid #fff; background: #000; font-size: 20px; letter-spacing: -.7px; }
.battery i { width: 13px; height: 22px; margin-right: 2px; background: #fdb515; }
.nub { width: 3px; height: 13px; background: #fff; }
.apps { display: flex; }
.app { width: 75px; height: 60px; display: flex; justify-content: center; align-items: center; background-position: 50% 100%; background-size: 61px 3px; background-repeat: no-repeat; }
.run { background-image: linear-gradient(#76b9ed, #76b9ed); }
.chrome > svg { margin-left: -3px; margin-top: 3px; }
.find { width: 78px; } .start { width: 69px; }
.office { font: bold 16px "Open Sans", sans-serif; fill: #fff; }
.phone { position: relative; }
.badge { position: absolute; left: 6px; top: 29px; width: 25px; height: 25px; border: 1px solid #bbb; border-radius: 50%; background: #222; font: bold 16px/22px "DejaVu Sans", sans-serif; text-align: center; }

/* floating recorder bar */
.recbar { position: absolute; left: 585px; top: 0; width: 752px; height: 39px; color: #fff; }
.recshape { position: absolute; }
.recitems { position: relative; display: flex; align-items: center; height: 38px; padding-left: 51px; font: 17px "Noto Sans", sans-serif; }
.pin { margin-left: 22px; }
.size { width: 88px; margin-left: 19px; letter-spacing: 0; white-space: nowrap; }
.name { width: 56px; margin-left: 134px; white-space: nowrap; }
.dot { width: 20px; height: 20px; margin-left: 102px; border-radius: 50%; background: #d92b2b; box-shadow: 0 0 0 2px #15191f; }
.rec { width: 46px; margin-left: 6px; font-size: 20px; letter-spacing: -.1px; color: #ddd; }
.cam { display: flex; align-items: center; justify-content: center; width: 34px; height: 34px; margin-left: 8px; background: #4788c4; }
.sep { width: 1px; height: 12px; margin-left: 3px; background: #777; }
.pen { margin-left: 11px; }
.two { margin: 0 13px 0 15px; }

/* floating drawing palette */
.drawbar { position: absolute; left: 1866px; top: 0; width: 54px; height: 566px; padding-left: 7px; border: 2px solid #15181f; background: linear-gradient(#262c35 515px, #000 515px); }
.drawbar .x { margin: 10px 0 11px 19px; }
.d { display: flex; align-items: center; justify-content: center; width: 39px; height: 39px; margin: 0 0 3px -2px; border: 1.500px solid #4a4f5a; background: #12161c; }
.d svg { width: 26px; height: 26px; }
.d.sel { background: #3c97f0; border: 0; }
.d.gap { margin-top: 9px; }
.dl { width: 50px; height: 1.500px; margin: 8px 0 8px -7px; background: #4a4f5a; }
.checker { width: 24px; height: 24px; background: repeating-conic-gradient(#fff 0 25%, #aaa 0 50%) 0 0 / 12px 12px; }
.num { font: bold 11px "Liberation Sans", sans-serif; fill: #15191f; }
.tee { font: 32px "Liberation Serif", serif; fill: #cfcfcf; }
.pair { display: flex; gap: 1px; margin-left: -1px; }
.pair i { display: flex; align-items: center; justify-content: center; width: 19px; height: 23px; border: 1px solid #4a4f5a; background: #12161c; }
```
